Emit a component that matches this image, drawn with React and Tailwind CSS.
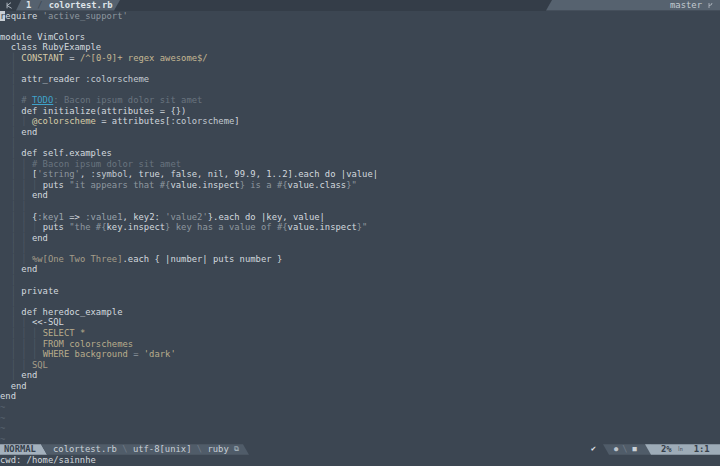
import React from 'react'

const FG = 'text-[#d3d9df]'
const STR = 'text-[#8e979f]'
const CMT = 'text-[#69747f]'
const SYM = 'text-[#c3cad1]'
const SYM2 = 'text-[#9aa3ac]'
const YEL = 'text-[#d6cba7]'
const RGX = 'text-[#c4b792]'
const TAN = 'text-[#b8ac8c]'
const TAN2 = 'text-[#a59d89]'
const TODO = 'text-[#3fa3cb] underline'

// code lines, tokens are [text, colour]
const code = [
  [0, [['require', FG], [' ', FG], ["'active_support'", STR]]],
  [0, []],
  [0, [['module VimColors', FG]]],
  [2, [['class RubyExample', FG]]],
  [4, [['CONSTANT', YEL], [' = ', FG], ['/^[0-9]+ regex awesome$/', RGX]]],
  [0, []],
  [4, [['attr_reader', FG], [' :colorscheme', SYM]]],
  [0, []],
  [4, [['# ', CMT], ['TODO', TODO], [': Bacon ipsum dolor sit amet', CMT]]],
  [4, [['def initialize(attributes = {})', FG]]],
  [6, [['@colorscheme', YEL], [' = attributes[', FG], [':colorscheme', SYM], [']', FG]]],
  [4, [['end', FG]]],
  [0, []],
  [4, [['def self.examples', FG]]],
  [6, [['# Bacon ipsum dolor sit amet', CMT]]],
  [6, [['[', FG], ["'string'", STR], [', ', FG], [':symbol', SYM], [', true, false, nil, 99.9, 1..2].each do |value|', FG]]],
  [8, [['puts ', FG], ['"it appears that #{', STR], ['value.inspect', FG], ['} is a #{', STR], ['value.class', FG], ['}"', STR]]],
  [6, [['end', FG]]],
  [0, []],
  [6, [['{', FG], [':key1', SYM2], [' => ', FG], [':value1', SYM2], [', key2: ', FG], ["'value2'", STR], ['}.each do |key, value|', FG]]],
  [8, [['puts ', FG], ['"the #{', STR], ['key.inspect', FG], ['} key has a value of #{', STR], ['value.inspect', FG], ['}"', STR]]],
  [6, [['end', FG]]],
  [0, []],
  [6, [['%w[One Two Three]', TAN2], ['.each { |number| puts number }', FG]]],
  [4, [['end', FG]]],
  [0, []],
  [4, [['private', FG]]],
  [0, []],
  [4, [['def heredoc_example', FG]]],
  [6, [['<<-SQL', FG]]],
  [8, [['SELECT *', TAN]]],
  [8, [['FROM colorschemes', TAN]]],
  [8, [['WHERE background ', TAN], ['=', STR], [" 'dark'", TAN]]],
  [6, [['SQL', TAN2]]],
  [4, [['end', FG]]],
  [2, [['end', FG]]],
  [0, [['end', FG]]],
]

function guidesFor(n) {
  const g = []
  if (n >= 5 && n <= 35) g.push(2)
  if (n === 11 || (n >= 15 && n <= 24) || (n >= 30 && n <= 34)) g.push(4)
  if (n === 17 || n === 21 || (n >= 31 && n <= 33)) g.push(6)
  return g
}

function CodeLine({ n, indent, tokens }) {
  const g = guidesFor(n)
  const lead = Math.max(indent, g.length ? g[g.length - 1] + 1 : 0)
  const cells = []
  for (let i = 0; i < lead; i++) {
    cells.push(
      g.includes(i)
        ? <span key={i} className="text-[#4d5864]">│</span>
        : <span key={i}> </span>
    )
  }
  return (
    <div className="h-[10.59px] leading-[10.59px] whitespace-pre">
      {cells}
      {n === 1 ? (
        <>
          <span className="bg-[#c9cfd5] text-[#3c4652]">r</span>
          <span className={FG}>equire</span>
          <span className={FG}> </span>
          <span className={STR}>'active_support'</span>
        </>
      ) : (
        tokens.map(([t, c], i) => <span key={i} className={c}>{t}</span>)
      )}
    </div>
  )
}

function TabIcon() {
  return (
    <svg viewBox="0 0 10 10" className="w-[7px] h-[7px]">
      <path d="M1.5 1 V9 M1.5 5 L7 1 M1.5 5 L8 9" stroke="#b9c2cb" strokeWidth="1.3" fill="none" />
    </svg>
  )
}

function BranchIcon() {
  return (
    <svg viewBox="0 0 10 12" className="w-[5px] h-[7px]">
      <path d="M2 1 V11 M2 6 Q8 6 8 1" stroke="#c3cad1" strokeWidth="1.4" fill="none" />
    </svg>
  )
}

export default function App() {
  return (
    <div
      className="w-[720px] h-[466px] overflow-hidden bg-[#3c4652] text-[8.85px] text-[#d3d9df]"
      style={{ fontFamily: '"DejaVu Sans Mono", "Liberation Mono", monospace' }}
    >
      {/* tabline */}
      <div className="h-[10.59px] leading-[10.59px] flex items-stretch bg-[#343d48] whitespace-pre">
        <div className="w-[18px] flex items-center justify-center">
          <TabIcon />
        </div>
        <div className="-ml-[2px] w-[104px] flex items-center bg-[#56626f] [clip-path:polygon(5px_0,100%_0,calc(100%-6px)_100%,0_100%)]">
          <span className="ml-[10px] font-bold text-[#dfe4e9]">1</span>
          <span className="ml-[6px] text-[#3d4753]">/</span>
          <span className="ml-[6px] font-bold text-[#dfe4e9]">colortest.rb</span>
        </div>
        <div className="flex-1" />
        <div className="w-[174px] flex items-center justify-end bg-[#56626f] [clip-path:polygon(6px_0,100%_0,100%_100%,0_100%)]">
          <span className="text-[#c3cad1]">master</span>
          <span className="ml-[6px] mr-[7px] flex items-center"><BranchIcon /></span>
        </div>
      </div>

      {/* buffer */}
      {code.map(([indent, tokens], i) => (
        <CodeLine key={i} n={i + 1} indent={indent} tokens={tokens} />
      ))}
      {[0, 1, 2, 3].map((i) => (
        <div key={i} className="h-[10.59px] leading-[10.59px] text-[#58636f]">~</div>
      ))}

      {/* statusline */}
      <div className="h-[10.59px] leading-[10.59px] flex items-stretch whitespace-pre">
        <div className="w-[47px] pl-[4px] flex items-center bg-[#a4b1bd] font-bold text-[#36404b] [clip-path:polygon(0_0,calc(100%-6px)_0,100%_100%,0_100%)]">
          NORMAL
        </div>
        <div className="-ml-[6px] w-[208px] pl-[12px] flex items-center bg-[#505c69] text-[#c9d0d7] [clip-path:polygon(0_0,calc(100%-6px)_0,100%_100%,6px_100%)]">
          <span>colortest.rb</span>
          <span className="text-[#6f7a86]"> \ </span>
          <span>utf-8[unix]</span>
          <span className="text-[#6f7a86]"> \ </span>
          <span>ruby </span>
          <span className="text-[#b7c0c9] text-[7px]">⧉</span>
        </div>
        <div className="flex-1" />
        <div className="w-[12px] flex items-center text-[#e3e8ec] text-[8px]">✔</div>
        <div className="w-[48px] flex items-center bg-[#505c69] [clip-path:polygon(0_0,100%_0,100%_100%,6px_100%)]">
          <span className="ml-[11px] text-[#bcc4cc] text-[7px]">●</span>
          <span className="ml-[4px] text-[#6f7a86]">\</span>
          <span className="ml-[5px] text-[#c9d0d7] text-[7px]">■</span>
        </div>
        <div className="-ml-[6px] w-[75px] flex items-center bg-[#9eacb8] font-bold text-[#36404b] [clip-path:polygon(0_0,100%_0,100%_100%,6px_100%)]">
          <span className="ml-[16px]">2%</span>
          <span className="ml-[5px] text-[7px] font-normal">㏑</span>
          <span className="ml-[10px]">1:1</span>
        </div>
      </div>

      {/* cmdline */}
      <div className="h-[10.59px] leading-[10.59px] whitespace-pre text-[#d3d9df]">cwd: /home/sainnhe</div>
    </div>
  )
}
